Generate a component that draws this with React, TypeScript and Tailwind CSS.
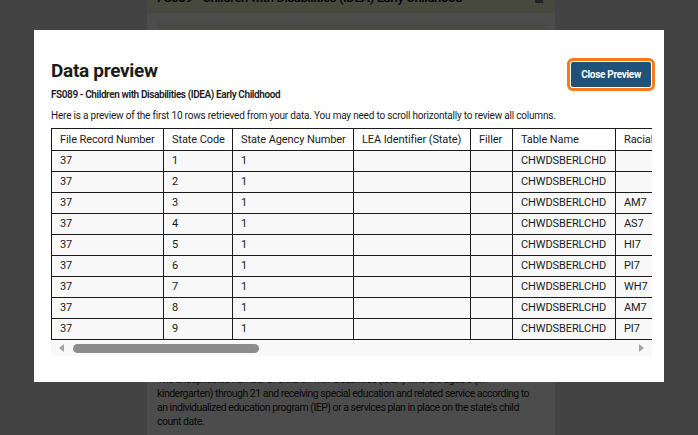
const racial = ["", "", "AM7", "AS7", "HI7", "PI7", "WH7", "AM7", "PI7"];

const columns = [
  { label: "File Record Number", w: "w-[112px]" },
  { label: "State Code", w: "w-[69px]" },
  { label: "State Agency Number", w: "w-[121px]" },
  { label: "LEA Identifier (State)", w: "w-[117px]" },
  { label: "Filler", w: "w-[42px]" },
  { label: "Table Name", w: "w-[103px]" },
  { label: "Racial Ethnic", w: "w-[120px]" },
  { label: "Disability Category", w: "w-[140px]" },
  { label: "Educational Environment", w: "w-[170px]" },
];

function PreviewTable() {
  return (
    <div className="w-[601px] overflow-hidden">
      <table className="table-fixed border-collapse font-['Roboto',sans-serif] text-[11px] leading-[14px] tracking-[-0.1px] text-[#1b1b1b] w-[994px]">
        <thead>
          <tr className="bg-white">
            {columns.map((c) => (
              <th
                key={c.label}
                className={`${c.w} border border-[#1b1b1b] px-[8px] h-[22px] text-left font-normal whitespace-nowrap`}
              >
                {c.label}
              </th>
            ))}
          </tr>
        </thead>
        <tbody>
          {racial.map((r, i) => (
            <tr key={i} className="bg-[#f8f8f8]">
              <td className="border border-[#1b1b1b] px-[8px] h-[21px]">37</td>
              <td className="border border-[#1b1b1b] px-[8px]">{i + 1}</td>
              <td className="border border-[#1b1b1b] px-[8px]">1</td>
              <td className="border border-[#1b1b1b] px-[8px]"></td>
              <td className="border border-[#1b1b1b] px-[8px]"></td>
              <td className="border border-[#1b1b1b] px-[8px]">CHWDSBERLCHD</td>
              <td className="border border-[#1b1b1b] px-[8px]">{r}</td>
              <td className="border border-[#1b1b1b] px-[8px]">{r ? "DD" : ""}</td>
              <td className="border border-[#1b1b1b] px-[8px]">{r ? "EL" : ""}</td>
            </tr>
          ))}
        </tbody>
      </table>
    </div>
  );
}

function FakeScrollbar() {
  return (
    <div className="flex h-[16px] w-[601px] items-center bg-[#f8f8f8] px-[8px]">
      <svg className="w-[6px] h-[8px] text-[#a3a3a3]" viewBox="0 0 6 8" fill="currentColor">
        <path d="M5 0v8L0 4z" />
      </svg>
      <div className="ml-[8px] h-[9px] w-[186px] rounded-full bg-[#8c8c8c]" />
      <div className="flex-1" />
      <svg className="w-[6px] h-[8px] text-[#a3a3a3]" viewBox="0 0 6 8" fill="currentColor">
        <path d="M1 0v8l5-4z" />
      </svg>
    </div>
  );
}

export default function App() {
  return (
    <div className="relative h-[435px] w-[698px] overflow-hidden bg-[#e0e0e0] font-['Roboto',sans-serif]">
      {/* page behind the dialog */}
      <div className="ml-[147px] flex h-full w-[408px] flex-col bg-white">
        <div className="flex h-[13px] items-start justify-between overflow-hidden bg-[#edf5d3] pl-[10px] pr-[12px]">
          <span className="-mt-[9px] text-[13px] leading-[14px] font-semibold tracking-[-0.4px] text-[#1b1b1b]">
            FS089 - Children with Disabilities (IDEA) Early Childhood
          </span>
          <span className="h-[3px] w-[8px] bg-[#71767a]" />
        </div>
        <div className="mx-[10px] mt-[9px] h-[330px] bg-[#f5f8dc]" />
        <p className="mt-[21px] whitespace-nowrap pl-[10px] text-[10.5px] leading-[14px] tracking-[-0.5px] text-[#1b1b1b]">
          The unduplicated number of children with disabilities (IDEA) who are aged 5 (in
          <br />
          kindergarten) through 21 and receiving special education and related service according to
          <br />
          an individualized education program (IEP) or a services plan in place on the state's child
          <br />
          count date.
        </p>
      </div>

      {/* overlay */}
      <div className="absolute inset-0 bg-black/70" />

      {/* dialog */}
      <div className="absolute left-[34px] top-[30px] h-[352px] w-[630px] bg-white pl-[17px] pr-[12px] pt-[29px]">
        <div className="flex items-start justify-between">
          <div>
            <h1 className="text-[19px] leading-[24px] font-bold tracking-[-0.3px] text-[#1b1b1b]">Data preview</h1>
            <p className="mt-[5px] text-[10px] leading-[13px] font-semibold tracking-[-0.4px] text-[#1b1b1b]">
              FS089 - Children with Disabilities (IDEA) Early Childhood
            </p>
          </div>
          <button className="mr-[1px] mt-[3px] h-[25px] rounded-[2px] bg-[#1f5279] px-[10px] text-[10px] font-bold tracking-[-0.3px] text-white outline-[3px] outline-solid outline-[#fa7a19] outline-offset-[1px]">
            Close Preview
          </button>
        </div>
        <p className="mt-[8px] whitespace-nowrap text-[10px] leading-[14px] tracking-[-0.2px] text-[#1b1b1b]">
          Here is a preview of the first 10 rows retrieved from your data. You may need to scroll horizontally to review all columns.
        </p>
        <div className="mt-[5px]">
          <PreviewTable />
          <FakeScrollbar />
        </div>
      </div>
    </div>
  );
}
